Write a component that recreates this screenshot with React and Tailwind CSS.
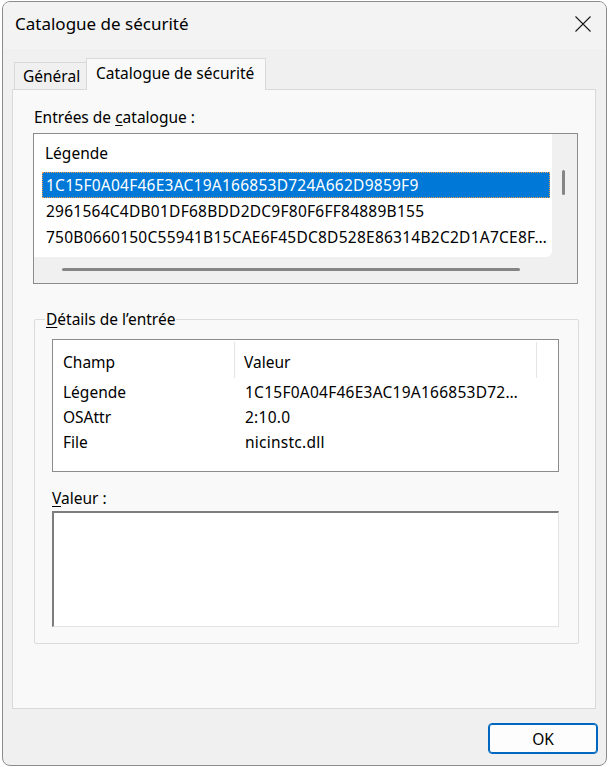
import { useState } from 'react'

const entries = [
  '1C15F0A04F46E3AC19A166853D724A662D9859F9',
  '2961564C4DB01DF68BDD2DC9F80F6FF84889B155',
  '750B0660150C55941B15CAE6F45DC8D528E86314B2C2D1A7CE8F…',
]

const details = [
  { field: 'Légende', value: '1C15F0A04F46E3AC19A166853D72…' },
  { field: 'OSAttr', value: '2:10.0' },
  { field: 'File', value: 'nicinstc.dll' },
]

function CloseIcon() {
  return (
    <svg width="16" height="16" viewBox="0 0 16 16" fill="none" stroke="#1a1a1a" strokeWidth="1.1">
      <path d="M0.5 0.5 L15.5 15.5 M15.5 0.5 L0.5 15.5" />
    </svg>
  )
}

export default function App() {
  const [selected, setSelected] = useState(0)

  return (
    <div className="w-[609px] h-[767px] bg-white pt-px pl-[2px] font-['Segoe_UI','Noto_Sans',sans-serif] text-[15.5px] text-black">
      <div className="w-[605px] h-[765px] rounded-[8px] border border-[#8c8c8c] bg-[#f0f0f0] overflow-hidden flex flex-col">
        {/* Title bar */}
        <div className="h-[47px] shrink-0 bg-[#f3f3f3] flex items-center justify-between pl-[12px] pr-[15px] pb-[4px]">
          <span className="text-[17px] leading-[22px]">Catalogue de sécurité</span>
          <CloseIcon />
        </div>

        {/* Tabs */}
        <div className="h-[40px] shrink-0 flex items-end pl-[11px]">
          <div className="h-[27px] w-[72px] border-t border-l border-[#d9d9d9] bg-[#f0f0f0] flex items-center pl-[8px] leading-[20px]">
            Général
          </div>
          <div className="relative z-10 -mb-px h-[32px] w-[180px] border-t border-l border-r border-[#d9d9d9] bg-[#f9f9f9] pl-[9px] pt-[4px] leading-[20px] whitespace-nowrap">
            Catalogue de sécurité
          </div>
        </div>

        {/* Tab panel */}
        <div className="ml-[9px] w-[584px] h-[620px] shrink-0 border border-[#d9d9d9] bg-[#f9f9f9]">
          <div className="pl-[21px] pt-[17px] leading-[20px]">
            Entrées de <span className="underline underline-offset-2">c</span>atalogue :
          </div>

          {/* Catalogue list */}
          <div className="mt-[6px] ml-[20px] w-[545px] h-[151px] border border-[#8c8c8c] bg-[#f0f0f0] flex flex-col">
            <div className="flex h-[123px]">
              <div className="w-[518px] h-[123px] bg-white rounded-br-[6px] pt-[9px]">
                <div className="h-[29px] pl-[11px] leading-[20px]">Légende</div>
                {entries.map((e, i) => (
                  <div
                    key={e}
                    onClick={() => setSelected(i)}
                    className={`ml-[8px] mr-[2px] h-[26px] pl-[3px] leading-[24px] whitespace-nowrap tracking-[0.25px] border ${
                      selected === i
                        ? 'bg-[#0078d7] text-white border-dotted border-[#e8a050]'
                        : 'border-transparent'
                    }`}
                  >
                    {e}
                  </div>
                ))}
              </div>
              <div className="flex-1 pt-[36px] pl-[10px]">
                <div className="w-[3px] h-[25px] rounded-full bg-[#858585]" />
              </div>
            </div>
            <div className="flex-1 pt-[11px] pl-[28px]">
              <div className="w-[458px] h-[3px] rounded-full bg-[#858585]" />
            </div>
          </div>

          {/* Entry details group */}
          <fieldset className="mt-[25px] ml-[21px] w-[545px] h-[335px] border border-[#dcdcdc] rounded-[2px] pl-[17px]">
            <legend className="-ml-[7px] px-px leading-[20px]">
              <span className="underline underline-offset-2">D</span>étails de l’entrée
            </legend>

            <div className="mt-[10px] w-[507px] h-[133px] border border-[#8c8c8c] bg-white">
              <div className="flex h-[40px]">
                <div className="w-[182px] my-[2px] border-r border-[#e5e5e5] pl-[10px] pt-[10px] leading-[20px]">Champ</div>
                <div className="w-[302px] my-[2px] border-r border-[#e5e5e5] pl-[9px] pt-[10px] leading-[20px]">Valeur</div>
              </div>
              {details.map((d) => (
                <div key={d.field} className="flex h-[25px] leading-[25px]">
                  <div className="w-[183px] pl-[10px]">{d.field}</div>
                  <div className="w-[300px] pl-[9px] whitespace-nowrap tracking-[0.25px]">{d.value}</div>
                </div>
              ))}
            </div>

            <div className="mt-[16px] leading-[20px]">
              <span className="underline underline-offset-2">V</span>aleur :
            </div>
            <div className="mt-[3px] w-[507px] h-[116px] bg-white border-t-2 border-l-2 border-r border-b border-t-[#7d7d7d] border-l-[#7d7d7d] border-r-[#e3e3e3] border-b-[#e3e3e3]" />
          </fieldset>
        </div>

        {/* Footer */}
        <div className="flex justify-end pt-[14px] pr-[8px]">
          <button className="w-[110px] h-[31px] rounded-[4px] border border-[#0067c0] bg-[#fdfdfd] leading-[20px] shadow-[inset_0_0_0_1px_#0067c0]">
            OK
          </button>
        </div>
      </div>
    </div>
  )
}
